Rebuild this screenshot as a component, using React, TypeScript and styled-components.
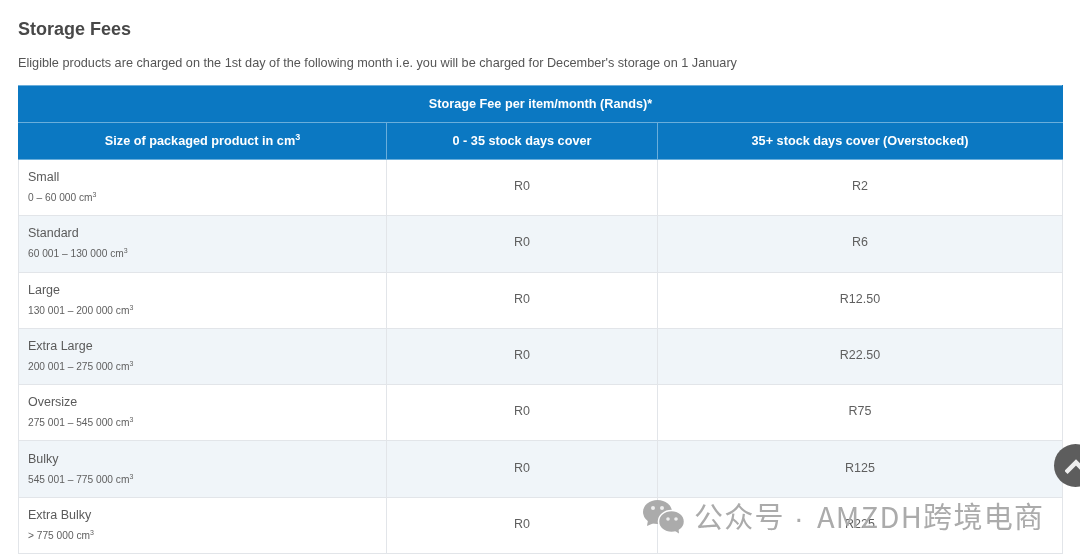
import styled, { createGlobalStyle } from 'styled-components'

const GlobalStyle = createGlobalStyle`
  html, body {
    margin: 0;
    padding: 0;
    background: #fff;
  }
  body {
    width: 1080px;
    height: 560px;
    overflow: hidden;
    font-family: 'Liberation Sans', Arial, sans-serif;
  }
`

const Page = styled.div`
  position: relative;
  width: 1080px;
  height: 560px;
  padding: 18px 18px 0;
  box-sizing: border-box;
  overflow: hidden;
  filter: blur(0.35px);
`

const Title = styled.h2`
  margin: 0;
  font-size: 18px;
  line-height: 22px;
  font-weight: 700;
  color: #484848;
`

const Intro = styled.p`
  margin: 14px 0 0;
  font-size: 12.7px;
  line-height: 18px;
  color: #555;
`

const Table = styled.table`
  width: 1045px;
  margin-top: 13px;
  border-collapse: collapse;
  table-layout: fixed;
`

const HeadCell = styled.th`
  height: 37px;
  padding: 0 0 1px;
  box-sizing: border-box;
  background: #0b78c2;
  border: 1px solid #6aaedb;
  border-left-color: #0b78c2;
  border-right-color: #6aaedb;
  color: #fff;
  font-size: 12.7px;
  font-weight: 700;
  text-align: center;

  &:last-child {
    border-right-color: #0b78c2;
  }

  sup {
    font-size: 9px;
    line-height: 0;
  }
`

const Row = styled.tr<{ $shaded: boolean }>`
  background: ${({ $shaded }) => ($shaded ? '#f0f5f9' : '#fff')};
`

const SizeCell = styled.td`
  height: 56.3px;
  padding: 0 9px 1px;
  box-sizing: border-box;
  border: 1px solid #e2e5e9;
  color: #5a5a5a;
  font-size: 12.5px;
  line-height: 15px;
`

const SizeRange = styled.div`
  margin-top: 6px;
  font-size: 10.2px;
  line-height: 13px;
  color: #606060;

  sup {
    font-size: 7px;
    line-height: 0;
  }
`

const ValueCell = styled.td`
  height: 56.3px;
  padding: 0 0 3px;
  box-sizing: border-box;
  border: 1px solid #e2e5e9;
  color: #5f5f5f;
  font-size: 12.5px;
  text-align: center;
`

const ScrollTop = styled.div`
  position: absolute;
  left: 1054px;
  top: 444px;
  width: 43px;
  height: 43px;
  border-radius: 50%;
  background: #5d5d5d;
  display: flex;
  align-items: center;
  padding-left: 11px;
  box-sizing: border-box;
`

const Watermark = styled.div`
  position: absolute;
  left: 643px;
  top: 497px;
  display: flex;
  align-items: center;
  gap: 9px;
  color: #ababab;
  font-family: 'Noto Sans CJK SC', 'Liberation Sans', sans-serif;
  font-size: 29px;
  line-height: 36px;
  letter-spacing: 1.3px;
  white-space: nowrap;
`

const WatermarkDot = styled.span`
  margin: 0 12px 0 9px;
  font-family: 'Liberation Sans', sans-serif;
`

const rows = [
  { name: 'Small', range: '0 – 60 000 cm', fee: 'R2' },
  { name: 'Standard', range: '60 001 – 130 000 cm', fee: 'R6' },
  { name: 'Large', range: '130 001 – 200 000 cm', fee: 'R12.50' },
  { name: 'Extra Large', range: '200 001 – 275 000 cm', fee: 'R22.50' },
  { name: 'Oversize', range: '275 001 – 545 000 cm', fee: 'R75' },
  { name: 'Bulky', range: '545 001 – 775 000 cm', fee: 'R125' },
  { name: 'Extra Bulky', range: '> 775 000 cm', fee: 'R225' },
]

const WeChatIcon = () => (
  <svg width="42" height="34" viewBox="0 0 42 34" fill="#ababab">
    <ellipse cx="14.500" cy="12" rx="14.500" ry="12" />
    <path d="M5 20 L4 26 L11 23z" />
    <circle cx="10" cy="8" r="2" fill="#eee" />
    <circle cx="19" cy="8" r="2" fill="#eee" />
    <ellipse cx="28.500" cy="21.500" rx="13" ry="11" stroke="#fff" strokeWidth="1.500" />
    <path d="M32 31 L36 33.500 L35.500 29z" />
    <circle cx="25" cy="19" r="1.800" fill="#eee" />
    <circle cx="33" cy="19" r="1.800" fill="#eee" />
  </svg>
)

const App = () => (
  <Page>
    <GlobalStyle />
    <Title>Storage Fees</Title>
    <Intro>
      Eligible products are charged on the 1st day of the following month i.e. you will be charged
      for December's storage on 1 January
    </Intro>
    <Table>
      <colgroup>
        <col style={{ width: 368 }} />
        <col style={{ width: 271 }} />
        <col />
      </colgroup>
      <thead>
        <tr>
          <HeadCell colSpan={3}>Storage Fee per item/month (Rands)*</HeadCell>
        </tr>
        <tr>
          <HeadCell>
            Size of packaged product in cm<sup>3</sup>
          </HeadCell>
          <HeadCell>0 - 35 stock days cover</HeadCell>
          <HeadCell>35+ stock days cover (Overstocked)</HeadCell>
        </tr>
      </thead>
      <tbody>
        {rows.map((row, i) => (
          <Row key={row.name} $shaded={i % 2 === 1}>
            <SizeCell>
              {row.name}
              <SizeRange>
                {row.range}
                <sup>3</sup>
              </SizeRange>
            </SizeCell>
            <ValueCell>R0</ValueCell>
            <ValueCell>{row.fee}</ValueCell>
          </Row>
        ))}
      </tbody>
    </Table>
    <ScrollTop>
      <svg width="26" height="18" viewBox="0 0 26 18" fill="none">
        <path d="M1 15.500 L11 5.500 L21 15.500" stroke="#eee" strokeWidth="4.500" />
      </svg>
    </ScrollTop>
    <Watermark>
      <WeChatIcon />
      <span>
        公众号
        <WatermarkDot>·</WatermarkDot>
        AMZDH跨境电商
      </span>
    </Watermark>
  </Page>
)

export default App
